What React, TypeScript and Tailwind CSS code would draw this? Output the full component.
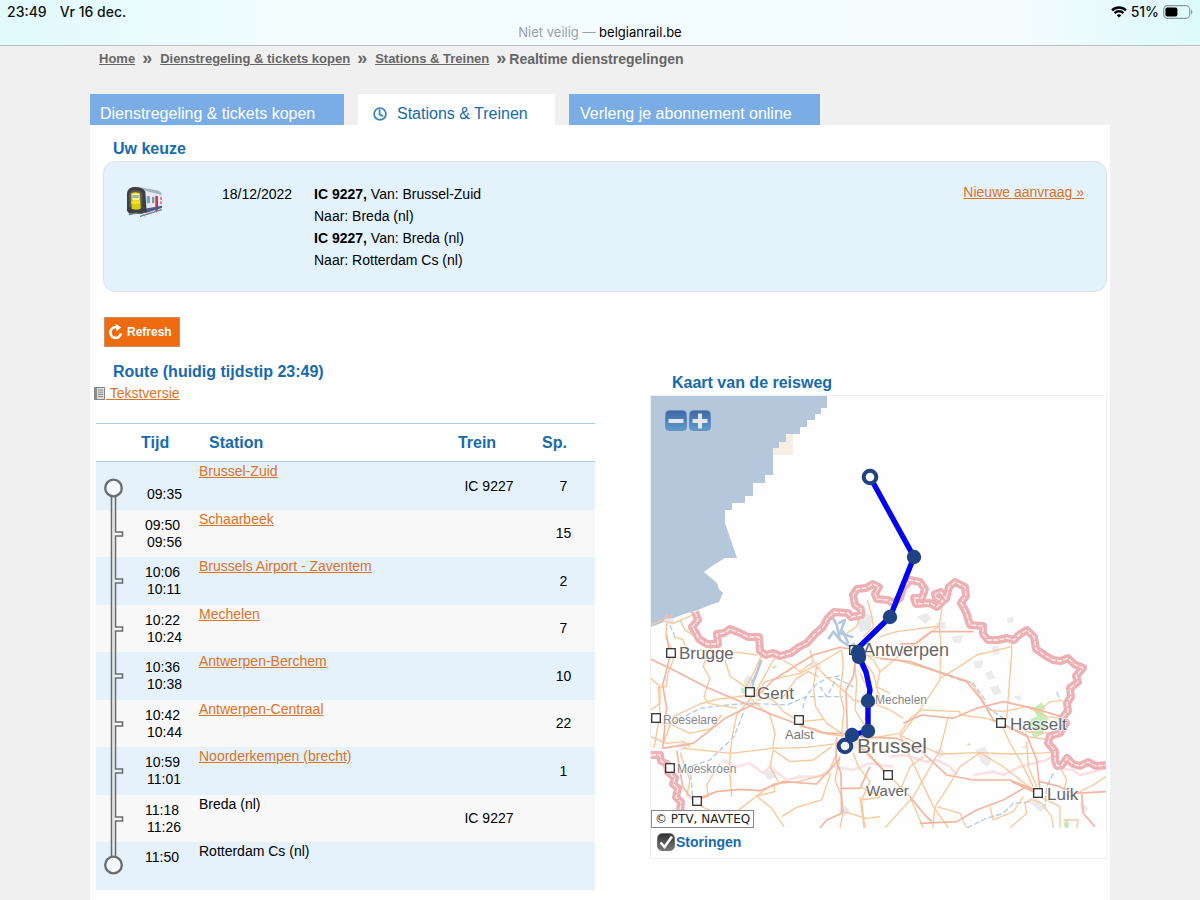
import { Fragment, useState } from 'react';
import clsx from 'clsx';

interface Stop {
  name: string;
  arrival?: string;
  departure?: string;
  train?: string;
  platform?: string;
  linked: boolean;
}

interface City {
  name: string;
  x: number;
  y: number;
  size: number;
  color: string;
  box?: [number, number];
}

const stops: Stop[] = [
  { name: 'Brussel-Zuid', departure: '09:35', train: 'IC 9227', platform: '7', linked: true },
  { name: 'Schaarbeek', arrival: '09:50', departure: '09:56', platform: '15', linked: true },
  { name: 'Brussels Airport - Zaventem', arrival: '10:06', departure: '10:11', platform: '2', linked: true },
  { name: 'Mechelen', arrival: '10:22', departure: '10:24', platform: '7', linked: true },
  { name: 'Antwerpen-Berchem', arrival: '10:36', departure: '10:38', platform: '10', linked: true },
  { name: 'Antwerpen-Centraal', arrival: '10:42', departure: '10:44', platform: '22', linked: true },
  { name: 'Noorderkempen (brecht)', arrival: '10:59', departure: '11:01', platform: '1', linked: true },
  { name: 'Breda (nl)', arrival: '11:18', departure: '11:26', train: 'IC 9227', linked: false },
  { name: 'Rotterdam Cs (nl)', arrival: '11:50', linked: false },
];

const crumbs = ['Home', 'Dienstregeling & tickets kopen', 'Stations & Treinen'];

const cities: City[] = [
  { name: 'Brugge', x: 679, y: 659, size: 17, color: '#666', box: [671, 653] },
  { name: 'Gent', x: 757, y: 699, size: 17, color: '#666', box: [750, 692] },
  { name: 'Antwerpen', x: 863, y: 656, size: 18, color: '#666', box: [854, 650] },
  { name: 'Brussel', x: 857, y: 753, size: 21, color: '#666' },
  { name: 'Hasselt', x: 1010, y: 730, size: 17, color: '#666', box: [1001, 723] },
  { name: 'Luik', x: 1047, y: 800, size: 17, color: '#666', box: [1038, 793] },
  { name: 'Waver', x: 866, y: 796, size: 15, color: '#666', box: [888, 775] },
  { name: 'Aalst', x: 785, y: 739, size: 13, color: '#777', box: [799, 720] },
  { name: 'Mechelen', x: 875, y: 704, size: 12, color: '#888' },
  { name: 'Roeselare', x: 663, y: 724, size: 12, color: '#888', box: [656, 718] },
  { name: 'Moeskroen', x: 677, y: 773, size: 12, color: '#888', box: [670, 768] },
  { name: '', x: 0, y: 0, size: 12, color: '#888', box: [697, 801] },
];

const northBorder =
  '695,612 698,620 692,627 696,633 699,639 707,644 718,644 717,634 724,633 730,629 740,633 748,637 759,637 760,651 766,655 773,653 780,656 791,653 799,647 807,643 815,634 823,627 827,619 834,612 848,613 851,617 861,615 861,609 855,605 853,595 857,589 866,588 873,584 879,587 875,594 877,599 888,600 893,603 900,598 903,588 910,580 920,582 925,589 922,598 914,598 916,604 930,603 937,607 943,601 936,598 935,594 941,592 946,599 949,587 955,582 965,587 966,596 961,603 966,612 970,625 983,626 983,634 988,640 998,640 1007,638 1014,640 1020,634 1027,630 1034,637 1036,649 1046,656 1053,660 1061,661 1068,658 1074,664 1083,668 1076,676 1078,682 1070,688 1071,697 1067,703 1068,711 1062,718 1066,723 1060,733 1050,736 1048,743 1055,751 1055,760 1057,766 1062,765 1067,758 1073,764 1080,766 1088,762 1096,766 1106,765';

const southBorder = '651,755 660,755 661,761 667,764 668,772 675,778 673,784 678,788 676,797 681,802 680,812 687,820 690,828';

const westRoads = [
  '33,75 62,62 100,70 165,42',
  '80,70 78,115 92,140 100,180 84,220 78,260 55,262 60,340 42,445',
  '100,110 128,118 140,150 200,152 300,158 350,165',
  '120,60 135,90 190,125 215,148',
  '205,150 190,200 210,235 192,290 205,310 290,325',
  '33,235 60,260 60,310 33,330',
  '365,165 345,210 318,262 270,228 255,180',
  '430,165 400,180 370,235 350,270 328,300 290,345 275,420 268,500 275,590',
  '70,430 100,350 180,312 230,298 330,285',
  '345,290 375,245 400,238 480,220 530,195 605,150',
  '350,300 430,290 470,235 505,215 535,230',
  '358,270 410,310 430,335 480,365 550,358',
  '335,300 390,345 405,400 398,445',
  '130,445 200,452 270,460 400,445 500,442 595,430',
  '400,450 390,500 415,545',
  '530,200 520,260 527,320 560,370 605,400',
  '530,200 560,232 600,262 640,300 680,310',
  '605,150 610,200 600,280 612,330 605,400',
  '430,180 455,195 480,215 520,185 510,150',
  '480,380 520,385 560,402 610,408',
  '33,365 90,372 150,400 215,385 245,345',
  '33,410 80,430 130,425 150,440',
  '590,460 565,520 475,545 400,552 350,588 290,635 270,680',
  '350,588 395,625 432,680',
  '400,552 405,575 350,588',
  '572,520 545,600 470,622 425,650',
  '240,490 200,555 205,590 160,602',
  '120,458 135,500 150,540 140,590',
  '180,618 230,640 280,655',
  '600,470 585,540 605,590 610,635 600,684',
  '640,460 655,500 690,545 665,600 720,592',
  '610,635 680,655 720,650',
  '575,440 520,480 450,485 400,450',
  '665,605 675,684',
  '640,150 650,250 645,330 690,400',
  '660,170 700,220 720,300',
  '620,100 650,80 660,50',
];

const westHighways = [
  '33,178 90,205 200,262 310,308 400,345 480,375 545,398 620,402',
  '80,105 90,170 68,255 80,325 68,445',
  '68,445 160,430 255,355 350,308',
  '110,452 128,560 160,602 230,575 300,568 360,572 430,545 530,552 600,475',
  '520,165 600,142 650,150 640,230 618,270 622,390',
  '590,410 588,480 603,520 605,640 560,660 540,684',
  '350,290 400,240 470,195 520,165',
  '605,565 660,565 690,500',
];

const eastRoads = [
  '22,0 35,45 40,80 10,110',
  '250,0 238,75 242,130 240,240 180,330 120,410',
  '60,110 110,95 240,78',
  '240,78 190,110 120,165 60,215 40,180 0,150',
  '60,215 50,260 90,280',
  '455,125 455,160 448,250 440,360',
  '455,140 350,165 290,205 240,235',
  '0,160 60,175 120,182 200,205 330,245 375,310',
  '185,330 300,335 300,345',
  '185,330 150,355 120,400 0,420',
  '40,310 90,330 130,355',
  '265,350 240,450 160,590',
  '300,345 380,355 420,370 500,410 575,420',
  '120,405 150,470 220,620 265,684',
  '120,405 190,440 240,462 360,458 450,462 580,458',
  '500,425 505,500 530,560',
  '360,458 430,500 500,555 540,580',
  '430,385 450,430 480,480 520,560',
  '360,458 300,500 265,560 225,620 218,684',
  '160,590 75,684',
  '0,430 80,520 150,590 190,684',
  '0,560 60,590 125,560 150,500 190,470',
  '0,590 12,684',
  '500,320 560,350 600,355',
  '545,325 570,305 610,302',
  '380,330 430,335 500,320 545,330',
  '470,370 500,395 570,400 570,440',
  '520,600 545,610 575,650 580,684',
  '540,580 495,610 500,640 450,684',
  '230,620 300,640 320,684',
  '390,620 400,660 460,635 490,590',
  '650,684 655,660 610,660',
  '600,500 620,540 610,580 650,600',
  '540,590 600,620 600,684',
  '738,530 700,555 650,580',
  '0,220 30,280 15,360',
];

const eastHighways = [
  '120,132 170,130 215,95 340,95',
  '60,175 150,185 320,245 365,300 400,360 500,405 530,480 540,570',
  '130,370 185,345 280,355 350,325 430,305 520,325 605,350',
  '0,410 110,415 180,450 260,525 340,540 450,540 500,560 530,575',
  '500,560 430,600 350,630 290,665 180,670',
  '520,575 455,545',
  '150,590 190,640 215,665',
  '540,545 600,560 640,580 738,575',
  '665,582 670,640 705,680',
  '0,440 60,500 75,520',
];

const waterways = [
  '364,180 342,245 330,285',
  '488,325 500,285 530,252 560,235 610,225',
  '95,370 180,325 260,315 330,310 440,315 500,290 610,290',
  '310,340 282,410 210,480 150,500',
  '150,500 158,590 190,620',
  '90,75 105,110',
  '540,260 560,290 590,235 640,260',
];

const eastWaterways = ['130,185 200,205 300,240 340,250 375,300', '380,320 430,355', '580,520 560,560 555,620', '320,684 380,655 430,640 460,610 510,605', '590,275 600,300'];

// built-up areas, drawn as soft grey patches
const westTowns = ['310,240 325,225 345,240 340,265 315,262', '650,60 670,35 700,50 690,90 660,95', '600,395 640,380 660,400 650,450 610,440', '110,435 130,425 145,440 125,452', '595,630 615,615 630,635 610,650', '505,195 525,180 545,195 530,212', '70,60 90,50 105,65 85,75', '370,520 400,505 410,530 385,540'];
const eastTowns = ['170,50 200,38 215,55 195,72', '228,70 255,65 258,88 232,90', '275,110 310,105 300,130 280,128', '375,220 395,212 405,235 385,240', '340,185 370,180 365,205 345,205', '440,55 460,48 460,68 445,70', '345,450 375,440 395,480 385,500 365,490', '390,262 415,255 425,280 400,285', '220,455 240,445 260,462 240,475', '460,290 485,285 480,305', '395,140 415,135 420,160 400,165', '480,440 500,435 505,450', '660,605 685,625 675,640 660,625', '500,600 530,595 560,625 540,635'];

const railRoute = '870,477 914,557 890,617 857,649 859,657 866,672 870,690 868,701 868,731 852,735 845,746';
const railStops: [number, number][] = [[914, 557], [890, 617], [858, 652], [859, 657], [868, 701], [868, 731], [852, 735]];

function StatusBar() {
  return (
    <header className="h-[46px] border-b border-[#b9c0c2] bg-[linear-gradient(90deg,#e2fafc_0%,#e6fbfd_8%,#f3fdfe_25%,#f4fcfe_85%,#dcf9fc_100%)] px-[7px] font-['Inter',sans-serif] text-sm text-[#111]">
      <div className="flex h-6 items-center justify-between">
        <div className="flex gap-[13px] font-medium">
          <span>23:49</span>
          <span>Vr 16 dec.</span>
        </div>
        <div className="flex items-center gap-1 font-medium">
          <svg className="h-3 w-4" viewBox="0 0 16 12" fill="none" stroke="#000" strokeWidth="2.4" aria-hidden="true">
            <path d="M1 4.3a10 10 0 0 1 14 0M3.6 7.1a6.3 6.3 0 0 1 8.8 0" />
            <path d="M8 11.6 5.7 9.3a3.3 3.3 0 0 1 4.6 0z" fill="#000" stroke="none" />
          </svg>
          <span>51%</span>
          <svg className="h-[14px] w-[30px]" viewBox="0 0 30 14" aria-hidden="true">
            <rect x=".7" y=".7" width="26" height="12.6" rx="3.8" fill="none" stroke="#8e9799" strokeWidth="1.2" />
            <rect x="2.4" y="2.4" width="12" height="9.2" rx="2" fill="#000" />
            <path d="M28 4.6v4.8c1.8-.7 1.8-4.1 0-4.8z" fill="#8e9799" />
          </svg>
        </div>
      </div>
      <p className="text-center text-[13px] leading-4 text-[#9aa2a4]">
        Niet veilig — <span className="text-black">belgianrail.be</span>
      </p>
    </header>
  );
}

function TrainIcon() {
  return (
    <svg className="h-8 w-[38px]" viewBox="0 0 114 96" aria-hidden="true">
      <path d="M36 4 92 14q16 3 16 18v34L56 86z" fill="#e7e9ef" />
      <path d="M36 3 92 13q14 3 16 14L58 14z" fill="#9fb4bd" />
      <path d="M58 26 104 32v18L60 52z" fill="#e9eef5" />
      <path d="m62 30 10 1v20l-10 1z" fill="#6fa8c8" />
      <path d="m78 32 7 1v18l-7 1z" fill="#8a929c" />
      <path d="m88 29 8 2v42l-8 4z" fill="#c8384a" />
      <path d="m102 32 6 2v8l-6-1zM102 46l6 1v8l-6-1z" fill="#d98590" />
      <path d="m56 68 52-9v7L56 82z" fill="#4d5b90" />
      <path d="M3 74V20Q6 3 28 3t30 14l4 60-14 6H10z" fill="#3d3f42" />
      <path d="M9 64V24q4-12 20-12t20 12v42z" fill="#5a5a52" />
      <path d="M15 22q13-7 27 0l2 46q-14 6-27 0z" fill="#d8cc12" />
      <path d="M19 24q10-4 20 0l1 19H20z" fill="#f3f0a8" />
      <path d="M20 27h18v9H20z" fill="#a8b59a" />
      <path d="M16 46h26v7H16z" fill="#f4e72a" />
      <path d="M42 91 108 71M8 86l26-5" stroke="#777d80" strokeWidth="4" />
      <path d="m52 84 4 7m14-12 4 6m14-10 4 5" stroke="#999" strokeWidth="3" />
    </svg>
  );
}

function TrackSegment({ index }: { index: number }) {
  const first = index === 0;
  const last = index === stops.length - 1;
  return (
    <svg className="block h-12 w-10" viewBox="0 0 40 48" fill="none" stroke="#6b6b6b" strokeWidth="1.6" aria-hidden="true">
      {first && (
        <>
          <path d="M15.5 34v14M19.5 34v14" />
          <circle cx="17.5" cy="26" r="8.3" strokeWidth="2.3" fill="#f4f8fb" />
        </>
      )}
      {last && (
        <>
          <path d="M15.5 0v15M19.5 0v15" />
          <circle cx="17.5" cy="23" r="8.3" strokeWidth="2.3" fill="#f4f8fb" />
        </>
      )}
      {!first && !last && (
        <>
          <path d="M15.5 0v48M19.5 0v22h7v4h-7v22" />
          <path d="M17.5 0v48" stroke="#e2e2e2" />
        </>
      )}
    </svg>
  );
}

function RouteTable() {
  return (
    <table className="mt-[21px] w-full table-fixed border-collapse text-sm leading-[17px] text-black">
      <colgroup>
        <col className="w-10" />
        <col className="w-[63px]" />
        <col />
        <col className="w-[110px]" />
        <col className="w-[63px]" />
      </colgroup>
      <thead>
        <tr className="h-[38px] border-y border-[#a9cbe8] text-left text-base text-[#176aac]">
          <th aria-label="Traject" />
          <th className="pl-[5px]">Tijd</th>
          <th className="pl-[10px]">Station</th>
          <th className="text-center">Trein</th>
          <th className="pl-[10px]">Sp.</th>
        </tr>
      </thead>
      <tbody>
        {stops.map((stop, i) => (
          <tr key={stop.name} className={clsx(i % 2 === 0 ? 'h-12 bg-[#e5f2fc]' : 'h-[47px] bg-[#f8f8f8]')}>
            <td className="p-0 align-top">
              <div className={clsx('overflow-hidden', i % 2 === 0 ? 'h-12' : 'h-[47px]')}>
                <TrackSegment index={i} />
              </div>
            </td>
            <td className="py-0 pt-[7px] pl-[9px] align-top">
              <div className="h-[17px]">{stop.arrival}</div>
              <div className="h-[17px] pl-[2px]">{stop.departure}</div>
            </td>
            <td className="pt-px align-top">
              {stop.linked ? (
                <a href="#" className="text-[#dd7327] underline">{stop.name}</a>
              ) : (
                stop.name
              )}
            </td>
            <td className="pl-6 text-center">{stop.train}</td>
            <td className="text-center">{stop.platform}</td>
          </tr>
        ))}
      </tbody>
    </table>
  );
}

function Lines({ data, stroke, width, dash }: { data: string[]; stroke: string; width: number; dash?: string }) {
  return (
    <g fill="none" stroke={stroke} strokeWidth={width} strokeDasharray={dash} strokeLinejoin="round">
      {data.map((points) => (
        <polyline key={points} points={points} />
      ))}
    </g>
  );
}

function RouteMap() {
  return (
    <svg className="block w-full" viewBox="651 396 455 432" role="img" aria-label="Kaart van de reisweg">
      <rect x="651" y="396" width="455" height="432" fill="#fefefe" />
      <path d="M773 434h20v21h-20z" fill="#f8efe4" />
      <path
        d="M651 396h176v12h-6v6h-6v6h-8v7h-7v7h-14v8h-7v6h-6v27h-8v8h-12v13h-8v7h-13v7h-7v13l12 35h-12l-13 8-8 6 13 11 2 6 4 4-4 9-9 3-12 5-14 4L651 627z"
        fill="#b5c7db"
      />

      <g transform="translate(640 600) scale(.3333)">
        {westTowns.map((p) => <polygon key={p} points={p} fill="#e9e9ec" />)}
        <path d="m395 200 12-4 6 6-14 6zM302 265l14-4 2 22-14-4z" fill="#c9ecc9" />
        <Lines data={['250,480 290,500 330,490 370,520 390,500 440,540 480,530 540,530 580,500 640,510 690,490 760,500']} stroke="#fae3e5" width={8} />
        <Lines data={waterways} stroke="#b4cadf" width={4} dash="16 8" />
        <Lines data={['574,45 590,75 600,120 580,95 565,118', '595,70 615,60 600,100 640,112', '600,120 630,140 645,130', '608,92 625,130', '364,180 350,220 336,250']} stroke="#b3c7df" width={8} />
        <Lines data={westRoads} stroke="#f9c795" width={4} />
        <Lines data={westHighways} stroke="#f3b5a2" width={5} />
      </g>

      <g transform="translate(860 600) scale(.3333)">
        {eastTowns.map((p) => <polygon key={p} points={p} fill="#ebebee" />)}
        <path d="m520 325 25-18 10 15-4 18 14 15-6 10-10 38-28 12-8-20 20-5-28-12 8-22 18-6z" fill="#c3efb8" />
        <path d="m610 668 14-8 4 20-12 6zM318 436l12-8 2 8z" fill="#bfeab6" />
        <Lines data={['90,470 130,465 200,485 230,480 270,500 290,525', '340,525 400,515 430,525 480,500 560,480 590,460', '600,505 640,510 660,525 700,515 738,505']} stroke="#fae0e3" width={8} />
        <Lines data={eastWaterways} stroke="#b4cadc" width={4} dash="18 6" />
        <Lines data={eastRoads} stroke="#f9c99b" width={4} />
        <Lines data={eastHighways} stroke="#f3b5a2" width={5} />
      </g>

      <Lines data={[northBorder, southBorder]} stroke="#edb0b4" width={8} />
      <Lines data={[northBorder, southBorder]} stroke="#fdf0f0" width={1.3} dash="5 1.5" />
      <path d="m664 618 3-3 2 3 3-3M690 611l6 4" fill="none" stroke="#f0b9be" strokeWidth="2" />

      {cities.map(({ name, x, y, size, color, box }) => (
        <Fragment key={name}>
          {box && <rect x={box[0] - 4.3} y={box[1] - 4.3} width="8.6" height="8.6" fill="#fff" stroke="#333" strokeWidth="1.3" />}
          {name && (
            <text x={x} y={y} fontSize={size} fill={color} stroke="#fff" strokeWidth="2" strokeOpacity=".6" paintOrder="stroke">
              {name}
            </text>
          )}
        </Fragment>
      ))}

      <polyline points={railRoute} fill="none" stroke="#0404ee" strokeWidth="5.4" strokeLinejoin="round" />
      {railStops.map(([cx, cy]) => (
        <circle key={`${cx}-${cy}`} cx={cx} cy={cy} r="7.2" fill="#1f4382" />
      ))}
      <circle cx="870" cy="477" r="6.3" fill="#fff" stroke="#1f4382" strokeWidth="4" />
      <circle cx="845" cy="746" r="6.3" fill="#fff" stroke="#1f4382" strokeWidth="4" />
    </svg>
  );
}

function ZoomButton({ label, plus }: { label: string; plus?: boolean }) {
  return (
    <button
      type="button"
      aria-label={label}
      className="flex h-[21px] w-[22px] items-center justify-center rounded border border-[#6d8fbc] bg-linear-to-b from-[#3f68a8] to-[#5b9bcb]"
    >
      <svg className="h-4 w-4" viewBox="0 0 16 16" fill="#e4e6ea" aria-hidden="true">
        <path d={plus ? 'M6 .5h4V6h5.5v4H10v5.5H6V10H.5V6H6z' : 'M.5 6h15v4H.5z'} />
      </svg>
    </button>
  );
}

export default function App() {
  const [disruptions, setDisruptions] = useState(true);

  return (
    <div className="min-h-screen bg-[#f0f0f0] font-['Liberation_Sans',Arial,sans-serif]">
      <StatusBar />

      <div className="mx-auto max-w-[1020px]">
        <nav className="flex h-[26px] items-center pl-[9px] text-[13px] font-bold text-[#666]">
          {crumbs.map((crumb, i) => (
            <Fragment key={crumb}>
              <a href="#" className="underline">{crumb}</a>
              <span className={clsx('ml-[7px] w-[11px] pb-[2px] text-lg leading-4', i < crumbs.length - 1 ? 'mr-[7px]' : 'mr-[2px]')}>»</span>
            </Fragment>
          ))}
          <span className="text-sm">Realtime dienstregelingen</span>
        </nav>

        <div className="mt-[22px] flex h-[31px] gap-[14px] text-base leading-[39px] text-white">
          <a href="#" className="w-[254px] bg-[#7aade6] pl-[10px]">Dienstregeling &amp; tickets kopen</a>
          <a href="#" className="flex w-[197px] items-center bg-white pl-[15px] text-[#176aac]">
            <svg className="mt-2 mr-[10px] h-[14px] w-[14px]" viewBox="0 0 14 14" fill="none" stroke="#3d84c0" strokeWidth="1.8" aria-hidden="true">
              <circle cx="7" cy="7" r="5.9" />
              <path d="M6.6 2.5v4.9l3.6 1.8" />
            </svg>
            <span className="pt-2">Stations &amp; Treinen</span>
          </a>
          <a href="#" className="w-[251px] bg-[#7aade6] pl-[11px]">Verleng je abonnement online</a>
        </div>

        <main className="bg-white pt-3 pb-[10px]">
          <h2 className="pl-[23px] text-base leading-6 font-bold text-[#176aac]">Uw keuze</h2>

          <section className="mr-[3px] ml-[13px] flex h-[131px] rounded-xl border border-[#dde3e8] bg-[#e4f2fb] px-[22px] pt-[21px] text-sm leading-[22px] text-black">
            <div className="w-24 pt-[3px]">
              <TrainIcon />
            </div>
            <div className="w-[92px]">18/12/2022</div>
            <div className="flex-1">
              <p><b>IC 9227,</b> Van: Brussel-Zuid</p>
              <p>Naar: Breda (nl)</p>
              <p><b>IC 9227,</b> Van: Breda (nl)</p>
              <p>Naar: Rotterdam Cs (nl)</p>
            </div>
            <a href="#" className="-mt-[2px] self-start text-[#dd7327] underline">Nieuwe aanvraag »</a>
          </section>

          <button
            type="button"
            className="mt-[25px] ml-[14px] flex h-[30px] w-[76px] items-center gap-1 border border-[#c88f68] bg-[#ee6b10] pl-[3px] text-xs font-bold text-white"
          >
            <svg className="h-4 w-[15px]" viewBox="0 0 15 16" fill="none" stroke="#fff" strokeWidth="2.6" aria-hidden="true">
              <path d="M9.6 3.4A5.4 5.4 0 1 0 13 9.6" />
              <path d="m7.6 0 5.6 3.2-4.6 4z" fill="#fff" stroke="none" />
            </svg>
            Refresh
          </button>

          <div className="mt-[13px] flex items-start justify-between gap-[55px] pr-[3px] pl-[6px]">
            <section className="min-w-0 flex-[499]">
              <h2 className="pl-[17px] text-base leading-6 font-bold text-[#176aac]">Route (huidig tijdstip 23:49)</h2>
              <a href="#" className="-ml-[2px] flex items-center text-sm leading-[18px] text-[#dd7327]">
                <svg className="mr-px h-[13px] w-[11px]" viewBox="0 0 11 13" aria-hidden="true">
                  <path d="M.5.5h10v12H.5z" fill="#dcdcdc" stroke="#858585" />
                  <path d="M1 1h2v11H1z" fill="#8d8d8d" />
                  <path d="M4 3h5M4 5.2h5M4 7.4h5M4 9.6h5" stroke="#8a8a8a" />
                </svg>
                <span className="whitespace-pre underline"> Tekstversie</span>
              </a>
              <RouteTable />
            </section>

            <section className="min-w-0 flex-[457] pt-3">
              <h2 className="pl-[22px] text-base leading-[22px] font-bold text-[#176aac]">Kaart van de reisweg</h2>
              <div className="mt-px border border-[#efefef]">
                <div className="relative">
                  <RouteMap />
                  <div className="absolute top-[14px] left-[14px] flex gap-[2px]">
                    <ZoomButton label="Uitzoomen" />
                    <ZoomButton label="Inzoomen" plus />
                  </div>
                  <p className="absolute bottom-0 left-0 border border-[#888] bg-white px-[3px] font-['DejaVu_Sans',sans-serif] text-xs leading-4 text-[#222]">
                    © PTV, NAVTEQ
                  </p>
                </div>
                <label className="flex h-[30px] items-center pb-[3px] pl-[6px] text-sm font-bold text-[#176aac]">
                  <span className="relative mr-px h-[18px] w-[18px]">
                    <input
                      type="checkbox"
                      checked={disruptions}
                      onChange={(e) => setDisruptions(e.target.checked)}
                      className="peer block h-[18px] w-[18px] appearance-none rounded-[5px] border border-[#777] bg-linear-to-b from-[#333] to-[#777]"
                    />
                    <svg className="pointer-events-none invisible absolute inset-0 h-[18px] w-[18px] peer-checked:visible" viewBox="0 0 18 18" fill="none" stroke="#fff" strokeWidth="2.6" aria-hidden="true">
                      <path d="m3.5 9.5 4 4.5L15 3.5" />
                    </svg>
                  </span>
                  Storingen
                </label>
              </div>
            </section>
          </div>
        </main>
      </div>
    </div>
  );
}
